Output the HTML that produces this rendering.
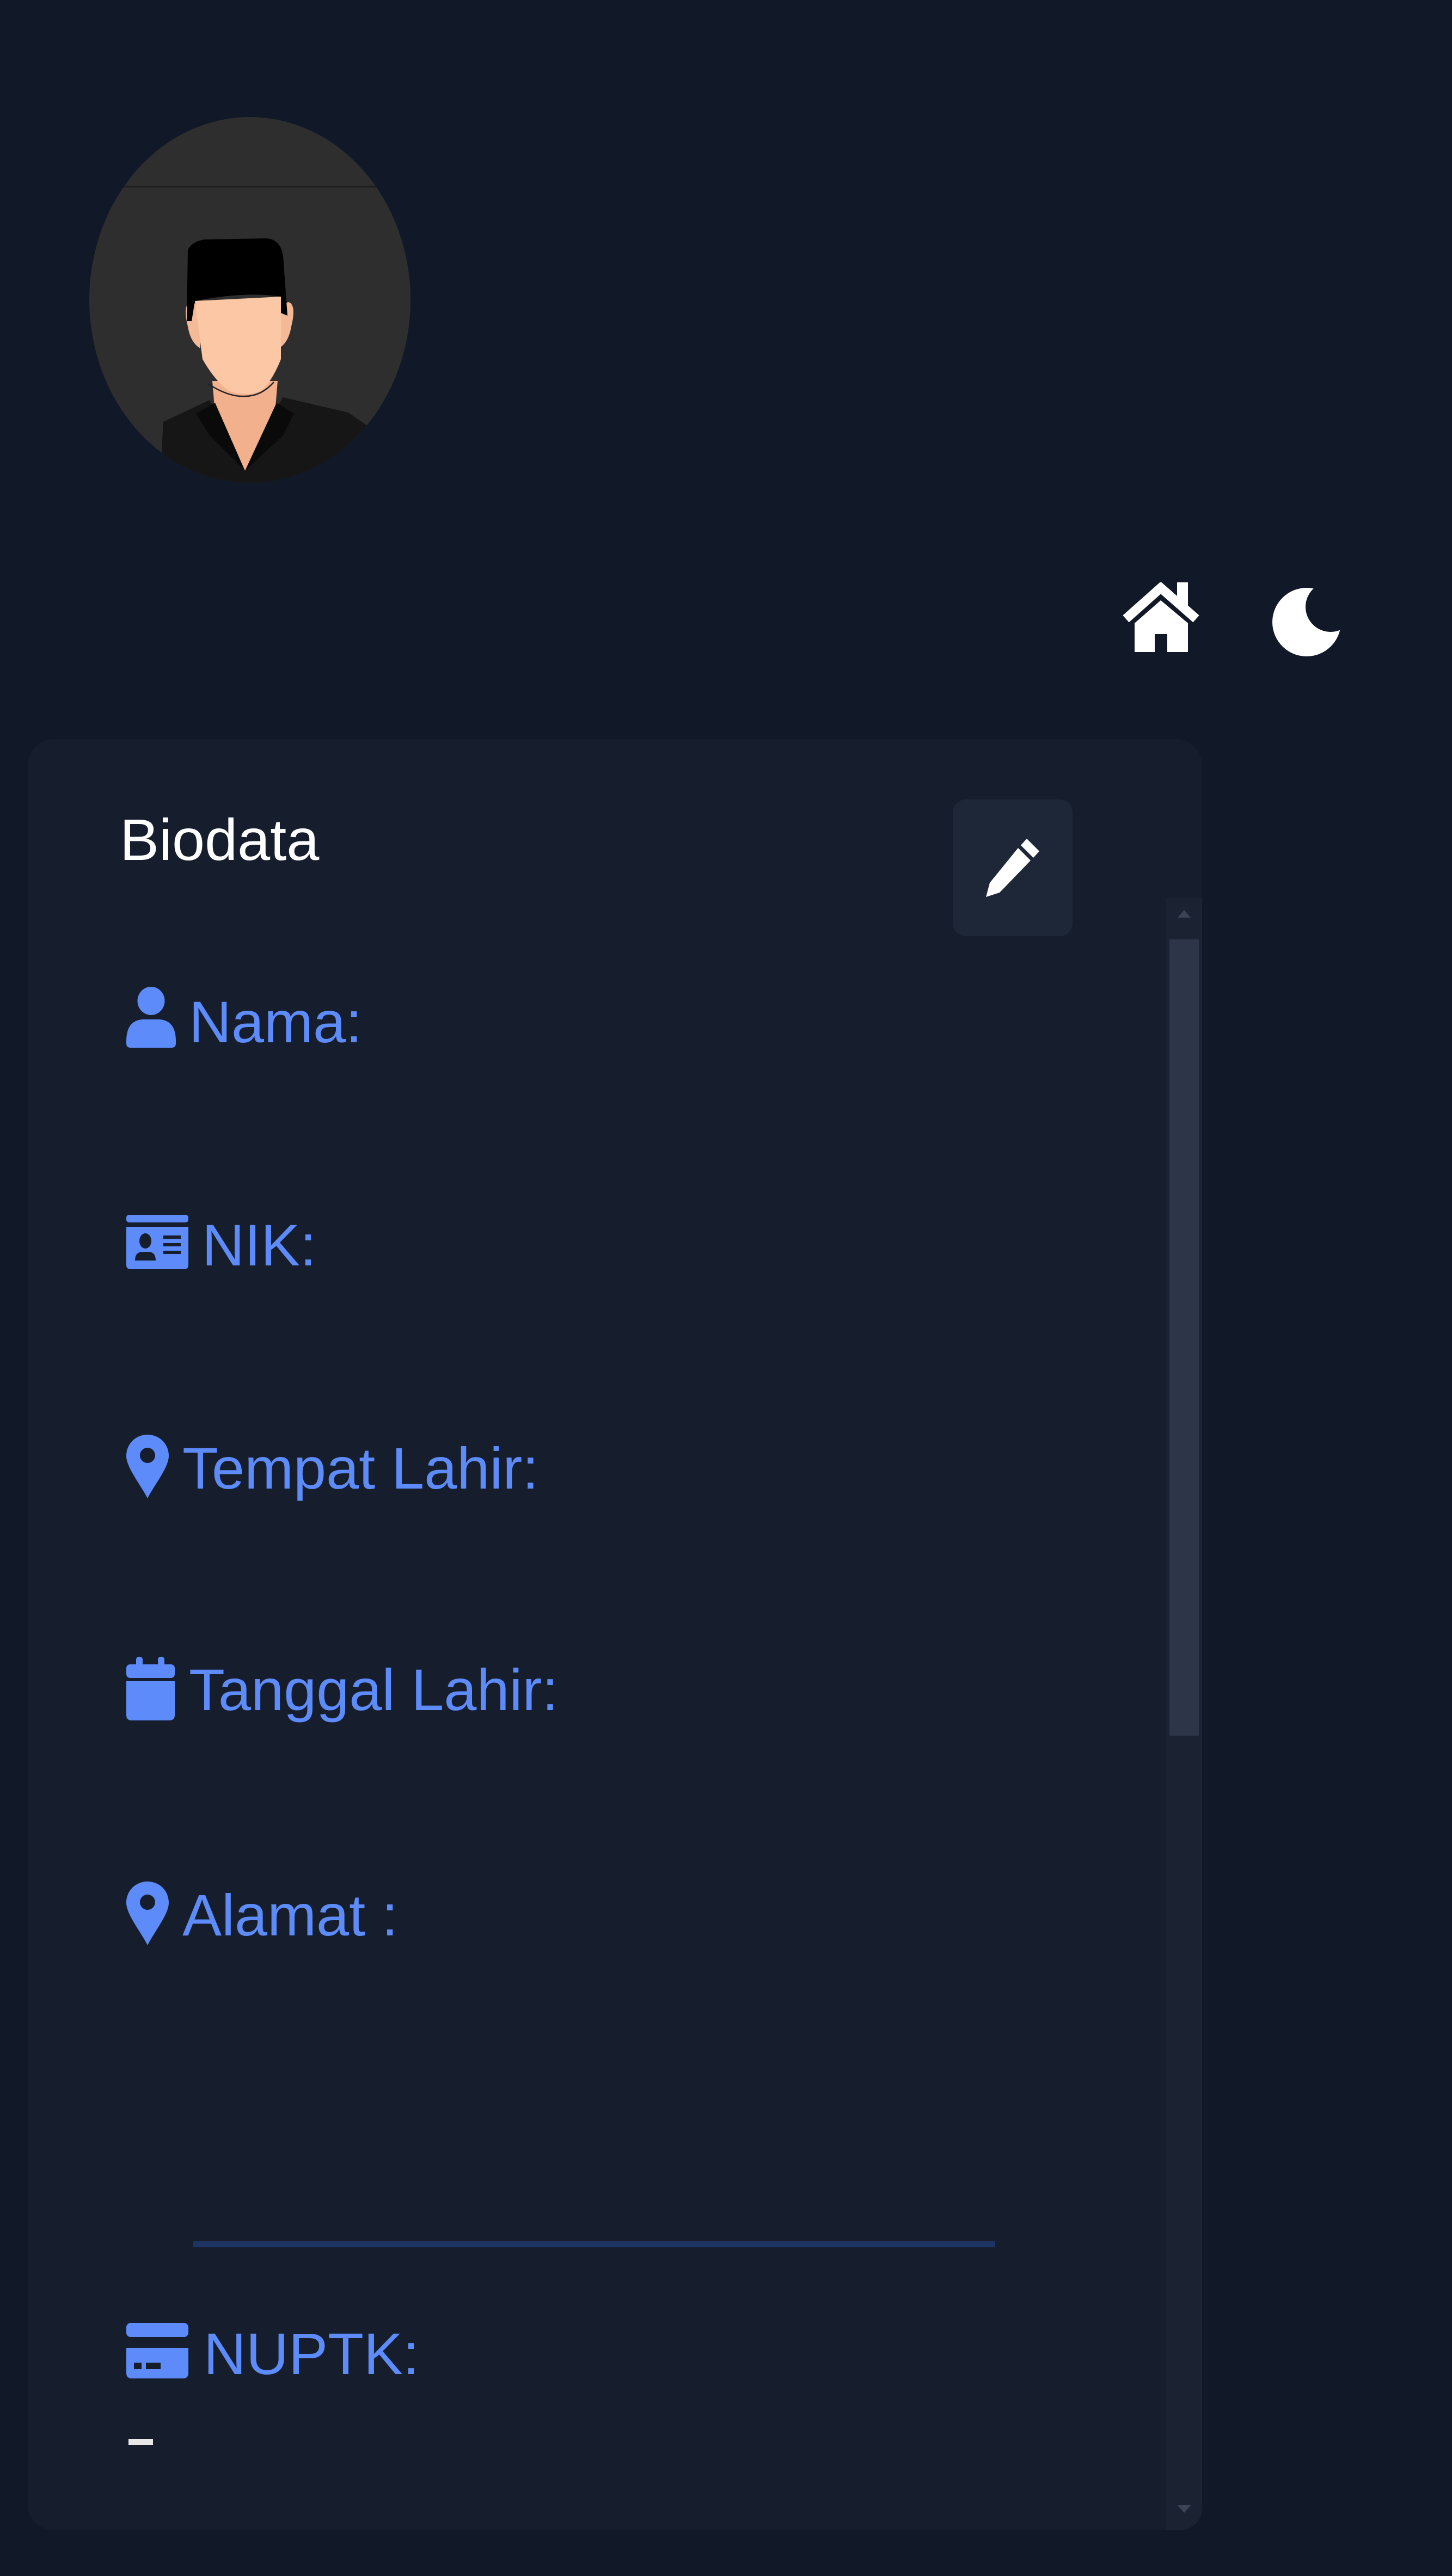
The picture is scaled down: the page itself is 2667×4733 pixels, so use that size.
<!DOCTYPE html>
<html><head><meta charset="utf-8"><style>
html,body{margin:0;padding:0;}
body{width:2667px;height:4733px;background:#111827;position:relative;overflow:hidden;font-family:"Liberation Sans",sans-serif;}
.abs{position:absolute;}
.card{left:51px;top:1358px;width:2157px;height:3291px;background:#161e2e;border-radius:48px;}
.lbl{position:absolute;color:#5d8bfa;font-size:108px;line-height:106px;white-space:nowrap;}
.ic{position:absolute;fill:#5d8bfa;}
</style></head><body>

<svg class="abs" style="left:0;top:0" width="900" height="950" viewBox="0 0 900 950">
<defs><clipPath id="av"><ellipse cx="459" cy="551" rx="295" ry="336"/></clipPath></defs>
<g clip-path="url(#av)">
<rect x="0" y="0" width="900" height="950" fill="#2e2e2e"/>
<line x1="150" y1="343" x2="760" y2="343" stroke="#1f1f1f" stroke-width="3"/>
<path d="M290 950 L300 775 L385 735 L450 840 L520 730 L640 758 L700 800 L720 950 Z" fill="#161616"/>
<path d="M390 700 L510 700 L505 760 L450 865 L395 760 Z" fill="#f2b08d"/>
<path d="M345 600 Q335 560 350 555 L365 560 L368 640 Q350 630 345 600 Z" fill="#f4b996"/>
<path d="M535 600 Q545 560 530 555 L515 560 L512 640 Q530 630 535 600 Z" fill="#f4b996"/>
<path d="M358 553 L516 545 L516 660 Q500 700 480 718 Q450 730 420 718 Q395 700 372 660 Z" fill="#fbc7a4"/>
<path d="M382 705 Q420 730 450 728 Q480 728 503 702" fill="none" stroke="#222" stroke-width="2.5"/>
<path d="M345 460 Q350 445 375 440 L490 438 Q515 440 520 470 L528 580 L516 575 L516 545 Q450 535 358 553 L352 590 L343 590 Z" fill="#000"/>
<path d="M360 760 L395 740 L450 865 L385 800 Z M540 760 L508 740 L450 865 L520 800 Z" fill="#0a0a0a"/>
</g>
</svg>

<svg class="abs" style="left:2062px;top:1070px" width="141" height="128" viewBox="0 0 141 128">
<rect x="100" y="0" width="20" height="45" fill="#fff"/>
<path d="M6 67 L70 10 L135 67" fill="none" stroke="#fff" stroke-width="17" stroke-linejoin="miter"/>
<path d="M22 75 L70 33 L120 75 L120 128 L82 128 L82 95 L59 95 L59 128 L22 128 Z" fill="#fff"/>
</svg>

<svg class="abs" style="left:2336px;top:1063px" width="130" height="148" viewBox="0 0 130 148">
<defs><mask id="mm"><rect width="130" height="148" fill="#fff"/><circle cx="108" cy="52" r="46" fill="#000"/></mask></defs>
<circle cx="64" cy="80" r="63" fill="#fff" mask="url(#mm)"/>
</svg>

<div class="abs card"></div>
<div class="abs" style="left:2142px;top:1650px;width:66px;height:2999px;background:#1b2333;border-bottom-right-radius:40px;"></div>
<div class="abs" style="left:2148px;top:1726px;width:54px;height:1463px;background:#2c3648;"></div>
<div class="abs" style="left:2163px;top:1672px;width:0;height:0;border-left:12px solid transparent;border-right:12px solid transparent;border-bottom:14px solid #3a4456;"></div>
<div class="abs" style="left:2163px;top:4603px;width:0;height:0;border-left:12px solid transparent;border-right:12px solid transparent;border-top:14px solid #3a4456;"></div>

<div class="lbl" style="left:220px;top:1490px;color:#fff;">Biodata</div>

<div class="abs" style="left:1750px;top:1469px;width:220px;height:251px;background:#1e2738;border-radius:24px;"></div>
<svg class="abs" style="left:1806px;top:1536px" width="110" height="120" viewBox="0 0 110 120">
<path d="M80 5 L103 28 L92 40 L69 17 Z" fill="#fff"/>
<path d="M64 22 L87 45 L30 104 L5 112 L12 86 Z" fill="#fff"/>
</svg>

<svg class="ic" style="left:232px;top:1813px" width="91" height="112" viewBox="0 0 91 112">
<ellipse cx="45.5" cy="26" rx="25" ry="26"/>
<path d="M0 100 Q0 62 30 60 L61 60 Q91 62 91 100 L91 104 Q91 112 83 112 L8 112 Q0 112 0 104 Z"/>
</svg>
<div class="lbl" style="left:347px;top:1825px;">Nama:</div>

<svg class="ic" style="left:232px;top:2232px" width="114" height="100" viewBox="0 0 114 100">
<rect x="0" y="0" width="114" height="14" rx="5"/>
<path d="M0 22 L114 22 L114 92 Q114 100 106 100 L8 100 Q0 100 0 92 Z"/>
<ellipse cx="35" cy="48" rx="11" ry="14" fill="#161e2e"/>
<path d="M16 84 Q16 68 30 68 L40 68 Q54 68 54 84 Z" fill="#161e2e"/>
<rect x="68" y="38" width="32" height="6" fill="#161e2e"/>
<rect x="68" y="52" width="32" height="6" fill="#161e2e"/>
<rect x="68" y="66" width="32" height="6" fill="#161e2e"/>
</svg>
<div class="lbl" style="left:371px;top:2235px;">NIK:</div>

<svg class="ic" style="left:232px;top:2636px" width="78" height="117" viewBox="0 0 78 117">
<path d="M39 0 C17 0 0 17 0 39 C0 60 25 90 39 117 C53 90 78 60 78 39 C78 17 61 0 39 0 Z M39 24 A14 14 0 1 1 38.9 24 Z" fill-rule="evenodd"/>
</svg>
<div class="lbl" style="left:335px;top:2645px;">Tempat Lahir:</div>

<svg class="ic" style="left:232px;top:3044px" width="89" height="117" viewBox="0 0 89 117">
<rect x="18" y="0" width="12" height="20" rx="5"/>
<rect x="58" y="0" width="12" height="20" rx="5"/>
<rect x="0" y="14" width="89" height="25" rx="7"/>
<path d="M0 45 L89 45 L89 107 Q89 117 79 117 L10 117 Q0 117 0 107 Z"/>
</svg>
<div class="lbl" style="left:347px;top:3052px;">Tanggal Lahir:</div>

<svg class="ic" style="left:232px;top:3457px" width="78" height="117" viewBox="0 0 78 117">
<path d="M39 0 C17 0 0 17 0 39 C0 60 25 90 39 117 C53 90 78 60 78 39 C78 17 61 0 39 0 Z M39 24 A14 14 0 1 1 38.9 24 Z" fill-rule="evenodd"/>
</svg>
<div class="lbl" style="left:335px;top:3466px;">Alamat :</div>

<div class="abs" style="left:355px;top:4118px;width:1473px;height:11px;background:#1e3463;"></div>

<svg class="ic" style="left:232px;top:4268px" width="114" height="102" viewBox="0 0 114 102">
<rect x="0" y="0" width="114" height="26" rx="8"/>
<path d="M0 46 L114 46 L114 92 Q114 102 104 102 L10 102 Q0 102 0 92 Z"/>
<rect x="14" y="73" width="14" height="12" fill="#161e2e"/>
<rect x="36" y="73" width="27" height="12" fill="#161e2e"/>
</svg>
<div class="lbl" style="left:374px;top:4272px;">NUPTK:</div>

<div class="abs" style="left:236px;top:4481px;width:45px;height:11px;background:#e8e8e8;"></div>

</body></html>
